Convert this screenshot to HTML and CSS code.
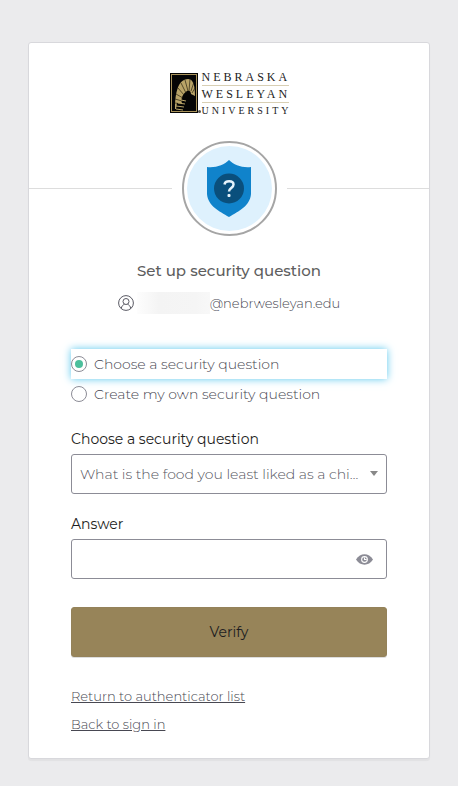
FILE: index.html
```html
<!DOCTYPE html>
<html lang="en">
<head>
  <meta charset="UTF-8">
  <meta name="viewport" content="width=device-width, initial-scale=1.0">
  <title>Set up security question</title>
  <link rel="stylesheet" href="styles.css">
</head>
<body>

<main class="card">
  <div class="logo">
    <svg class="logo-mark" viewBox="0 0 28 40" aria-hidden="true">
      <rect width="28" height="40" fill="#050505"/>
      <rect x="1.5" y="1.5" width="25" height="37" fill="none" stroke="#a8925a"/>
      <path d="M5 36C5 20 8 6 18 6C23 6 25 12 25 23L21 21C21 18 19 17 17 18C11 22 11 28 12 30L7 30L6 36z" fill="#b9a468"/>
      <path d="M5 30L12 31M5 26L12 28M6 21L13 25M8 15L14 22M11 10L16 20M15 7L18 18M20 6L19 18M24 9L21 18M25 15L22 20" fill="none" stroke="#2a2411" stroke-width=".7"/>
      <path d="M8 30L15 31M6 33L14 34M6 36L13 37M11 27L16 28" fill="none" stroke="#b9a468"/>
    </svg>
    <span class="logo-dot"></span>
    <div class="logo-text">
      <span class="logo-line">NEBRASKA</span>
      <span class="logo-line">WESLEYAN</span>
      <span class="logo-line logo-line-small">UNIVERSITY</span>
    </div>
  </div>

  <div class="beacon-row">
    <div class="beacon">
      <svg class="shield" viewBox="0 0 44 57" aria-hidden="true">
        <path d="M22 0C17 5 9 8 0 7V34C1 46 12 51 22 57C32 51 43 46 44 34V7C35 8 27 5 22 0z" fill="#1083cb"/>
        <circle cx="22" cy="28.500" r="15" fill="#0a4f7c"/>
        <path d="M17.500 24.500C18 20 26.500 20 26.500 24.500C26.500 28 22 28 22 31.500" fill="none" stroke="#e6f3fb" stroke-width="2.500"/>
        <rect x="20.500" y="34" width="3" height="3" rx="1" fill="#e6f3fb"/>
      </svg>
    </div>
  </div>

  <form class="content">
    <h1>Set up security question</h1>
    <div class="identifier">
      <svg class="user-icon" viewBox="0 0 16 16" aria-hidden="true">
        <circle cx="8" cy="8" r="7.400"/>
        <circle cx="8" cy="6.500" r="3"/>
        <path d="M3.300 13.500C3.500 11 5 10 6.500 9.200M12.700 13.500C12.500 11 11 10 9.500 9.200"/>
      </svg>
      <span class="redacted"></span>
      <span>@nebrwesleyan.edu</span>
    </div>

    <div class="choices">
      <label class="choice choice-focused">
        <input type="radio" name="type" checked>
        Choose a security question
      </label>
      <label class="choice">
        <input type="radio" name="type">
        Create my own security question
      </label>
    </div>

    <label class="field-label" for="question">Choose a security question</label>
    <div class="field">
      <select id="question">
        <option>What is the food you least liked as a child?</option>
      </select>
      <span class="arrow"></span>
    </div>

    <label class="field-label" for="answer">Answer</label>
    <div class="field">
      <input type="password" id="answer">
      <button class="toggle" type="button" aria-label="Show answer">
        <svg viewBox="0 0 16 10" aria-hidden="true">
          <path d="M0 5C4-1.500 12-1.500 16 5C12 11.500 4 11.500 0 5z" fill="#8c8c96"/>
          <circle cx="8" cy="5" r="2.700" fill="none" stroke="#fff"/>
          <path d="M8 3V5H10" fill="none" stroke="#fff"/>
        </svg>
      </button>
    </div>

    <button class="verify" type="submit">Verify</button>

    <div class="links">
      <a href="#">Return to authenticator list</a>
      <a href="#">Back to sign in</a>
    </div>
  </form>
</main>

</body>
</html>
```

FILE: styles.css
```css
* {
  box-sizing: border-box;
}

body {
  margin: 0;
  padding: 42px 28px 26px;
  background-color: #ebebed;
  font-family: Montserrat, Inter, sans-serif;
  font-size: 14px;
  font-weight: 300;
  color: #484852;
}

.card {
  max-width: 402px;
  margin: 0 auto;
  padding: 30px 0 24px;
  background: #ffffff;
  border: 1px solid #d8d8dc;
  border-radius: 3px;
  box-shadow: 0 2px 1px rgba(0, 0, 0, 0.04);
}

.logo {
  display: flex;
  justify-content: center;
  height: 40px;
}

.logo-mark {
  width: 28px;
  height: 40px;
}

.logo-dot {
  align-self: flex-end;
  width: 3px;
  height: 3px;
  margin-right: 1px;
  border-radius: 50%;
  background: #55534c;
}

.logo-text {
  display: flex;
  flex-direction: column;
  width: 87px;
  font-family: "Liberation Serif", serif;
  font-size: 12px;
  font-weight: 400;
  line-height: 8px;
  letter-spacing: 3px;
  color: #222222;
}

.logo-line {
  padding-bottom: 4px;
  border-bottom: 1px solid #d8cfb4;
  white-space: nowrap;
}

.logo-line + .logo-line {
  padding-top: 4px;
}

.logo-line-small {
  border-bottom: none;
  font-size: 10px;
}

/* circle with a rule on each side */
.beacon-row {
  display: flex;
  align-items: center;
  gap: 10px;
  margin-top: 28px;
}

.beacon-row::before,
.beacon-row::after {
  content: "";
  flex: 1;
  border-top: 1px solid #dddddd;
}

.beacon {
  display: flex;
  justify-content: center;
  align-items: center;
  width: 95px;
  height: 95px;
  padding: 3px;
  border: 2px solid #a5a5a5;
  border-radius: 50%;
  background: #def1fd content-box;
}

.shield {
  width: 44px;
  height: 57px;
}

.content {
  padding: 0 42px;
}

h1 {
  margin: 24px 0 0;
  font-size: 15px;
  line-height: 22px;
  font-weight: 500;
  text-align: center;
  color: #5e5e5e;
}

.identifier {
  display: flex;
  justify-content: center;
  align-items: center;
  height: 22px;
  margin-top: 10px;
  font-size: 13px;
}

.user-icon {
  width: 16px;
  height: 16px;
  margin-right: 3px;
  fill: none;
  stroke: #5a5a64;
}

.redacted {
  width: 73px;
  height: 22px;
  background: linear-gradient(90deg, #fdfdfd, #f4f4f4 30%, #f5f5f5 80%, #f8f8f8);
}

.choices {
  margin: 35px 0 20px;
}

.choice {
  display: flex;
  align-items: center;
  gap: 7px;
  height: 30px;
}

.choice-focused {
  box-shadow: 0 0 8px #5bc8ee;
}

.choice input {
  appearance: none;
  width: 16px;
  height: 16px;
  margin: 0;
  border: 1px solid #8c8c96;
  border-radius: 50%;
}

.choice input:checked {
  padding: 3px;
  background: #4cbf9c content-box;
}

.field-label {
  display: block;
  line-height: 20px;
  margin-bottom: 5px;
  font-weight: 400;
  color: #1d1d21;
}

.field {
  position: relative;
  margin-bottom: 20px;
}

.field select,
.field input {
  appearance: none;
  display: block;
  width: 100%;
  height: 40px;
  padding: 0 26px 0 8px;
  border: 1px solid #8c8c96;
  border-radius: 3px;
  background: #ffffff;
  font: inherit;
  color: #55555e;
  text-overflow: ellipsis;
}

.arrow {
  position: absolute;
  right: 9px;
  top: 17px;
  border: 4px solid transparent;
  border-top: 5px solid #888888;
  border-bottom: none;
  pointer-events: none;
}

.toggle {
  position: absolute;
  right: 14px;
  top: 15px;
  display: flex;
  width: 17px;
  height: 11px;
  padding: 0;
  border: none;
  background: none;
}

.verify {
  display: block;
  width: 100%;
  height: 50px;
  margin-top: 28px;
  border: 1px solid #94825a;
  border-radius: 3px;
  background: #978459;
  box-shadow: 0 1px 0 #dddddd;
  font: inherit;
  font-weight: 400;
  color: #1d1d21;
}

.links {
  display: flex;
  flex-direction: column;
  align-items: flex-start;
  gap: 8px;
  margin-top: 29px;
  font-size: 13px;
  line-height: 20px;
}

.links a {
  color: #484852;
}
```
